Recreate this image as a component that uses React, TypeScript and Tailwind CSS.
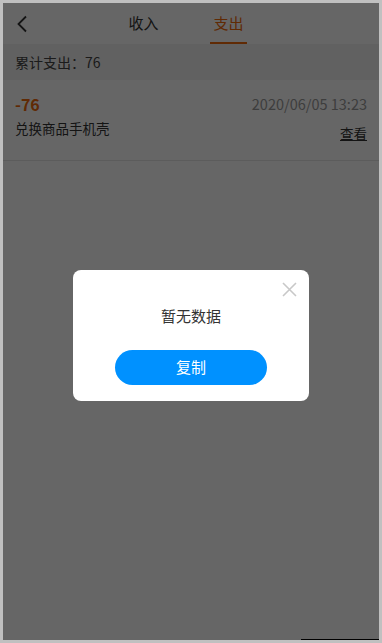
import React from "react";

export default function App() {
  const font = { fontFamily: '"Noto Sans CJK SC", "Noto Sans", sans-serif' };
  return (
    <div className="w-[382px] h-[643px] border-[3px] border-[#c0c0c0] bg-white relative overflow-hidden" style={font}>
      <div className="flex flex-col h-full">
        {/* header */}
        <div className="h-[41px] flex items-center relative shrink-0">
          <div className="w-[36px] flex justify-center pl-[2px]">
            <svg width="12" height="18" viewBox="0 0 12 18" fill="none">
              <path d="M10 1.5 L2.5 9 L10 16.5" stroke="#333" strokeWidth="1.8" />
            </svg>
          </div>
          <div className="flex-1 flex justify-center">
            <div className="flex gap-[48px] ml-[-46px]">
              <div className="h-[41px] w-[37px] flex items-center justify-center text-[15px] text-[#333]">收入</div>
              <div className="h-[41px] w-[37px] flex items-center justify-center text-[15px] text-[#f06a0c] border-b-2 border-[#f06a0c] pt-[2px]">支出</div>
            </div>
          </div>
        </div>
        {/* summary */}
        <div className="h-[36px] bg-[#f2f2f2] flex items-center px-[12px] text-[14px] text-[#444] shrink-0">
          累计支出：76
        </div>
        {/* item */}
        <div className="h-[81px] border-b border-[#e6e6e6] px-[12px] pt-[14px] shrink-0">
          <div className="flex justify-between items-center h-[20px]">
            <span className="text-[16px] font-bold text-[#f06a0c]">-76</span>
            <span className="text-[14.5px] text-[#9a9a9a]">2020/06/05 13:23</span>
          </div>
          <div className="flex justify-between items-start mt-[4px]">
            <span className="text-[13.5px] text-[#333]">兑换商品手机壳</span>
            <span className="text-[13.5px] text-[#333] underline mt-[5px]">查看</span>
          </div>
        </div>
        <div className="flex-1" />
      </div>
      {/* mask */}
      <div className="absolute inset-0 bg-black/60 flex justify-center">
        <div className="mt-[267px] w-[236px] h-[131px] bg-white rounded-[8px] relative flex flex-col items-center">
          <svg className="absolute right-[12px] top-[12px]" width="15" height="15" viewBox="0 0 15 15">
            <path d="M1 1 L14 14 M14 1 L1 14" stroke="#c8c8c8" strokeWidth="1.6" />
          </svg>
          <div className="mt-[36px] text-[15px] text-[#333] leading-[20px]">暂无数据</div>
          <button className="mt-[24px] w-[152px] h-[35px] rounded-full bg-[#0091ff] text-white text-[15px]">复制</button>
        </div>
      </div>
      <div className="absolute right-0 bottom-0 w-[78px] h-[1px] bg-black" />
    </div>
  );
}
